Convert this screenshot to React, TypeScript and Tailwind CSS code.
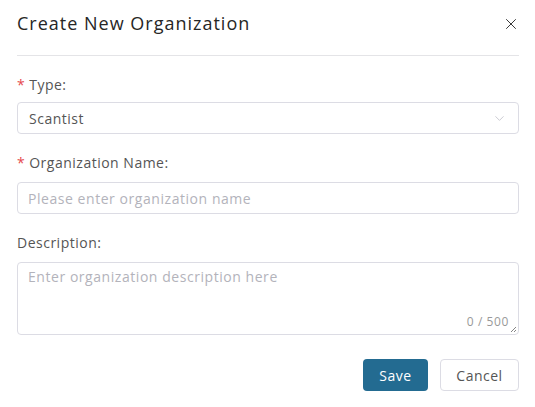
import { X, ChevronDown } from "lucide-react";

export default function App() {
  const font = { fontFamily: '"Open Sans", "Liberation Sans", sans-serif' };
  return (
    <div className="w-[535px] h-[407px] bg-white pl-[17px] pr-[16px]" style={font}>
      {/* Header */}
      <div className="h-[56px] flex items-center justify-between border-b border-[#e4e4e7] pb-[8px]">
        <h1 className="text-[18px] font-medium text-[#262626] tracking-[1px]">Create New Organization</h1>
        <X className="w-[18px] h-[18px] text-[#333] mr-[-1px]" strokeWidth={1.3} />
      </div>

      {/* Type */}
      <div className="mt-[19px] text-[14px] text-[#555] h-[20px] leading-[20px] tracking-[0.5px]">
        <span className="text-[#e5484d] mr-[4px]">*</span>Type:
      </div>
      <div className="mt-[7px] h-[32px] border border-[#dcdce4] rounded-[4px] flex items-center justify-between px-[11px]">
        <span className="text-[14px] text-[#555] tracking-[0.5px]">Scantist</span>
        <ChevronDown className="w-[15px] h-[15px] text-[#c4c4cc]" strokeWidth={1.4} />
      </div>

      {/* Organization Name */}
      <div className="mt-[19px] text-[14px] text-[#555] h-[20px] leading-[20px] tracking-[0.5px]">
        <span className="text-[#e5484d] mr-[4px]">*</span>Organization Name:
      </div>
      <div className="mt-[9px] h-[32px] border border-[#dcdce4] rounded-[4px] flex items-center px-[10px]">
        <span className="text-[14px] text-[#b3b3bb] tracking-[0.55px]">Please enter organization name</span>
      </div>

      {/* Description */}
      <div className="mt-[19px] text-[14px] text-[#555] h-[20px] leading-[20px] tracking-[0.5px]">
        Description:
      </div>
      <div className="relative mt-[9px] h-[73px] border border-[#dcdce4] rounded-[4px] px-[10px] pt-[1px]">
        <span className="text-[14px] text-[#b3b3bb] tracking-[0.55px]">Enter organization description here</span>
        <span className="absolute right-[9px] bottom-[3px] text-[12px] text-[#999] tracking-[0.6px]">0 / 500</span>
        <svg className="absolute right-[1px] bottom-[1px]" width="7" height="7" viewBox="0 0 7 7">
          <path d="M6 1 L1 6 M6 4 L4 6" stroke="#777" strokeWidth="0.9" />
        </svg>
      </div>

      {/* Buttons */}
      <div className="mt-[24px] flex justify-end gap-[12px]">
        <button className="h-[32px] w-[65px] rounded-[4px] bg-[#236b91] text-white text-[14px] tracking-[0.5px]">
          Save
        </button>
        <button className="h-[32px] w-[79px] rounded-[4px] border border-[#dcdce4] bg-white text-[#555] text-[14px] tracking-[0.5px]">
          Cancel
        </button>
      </div>
    </div>
  );
}
